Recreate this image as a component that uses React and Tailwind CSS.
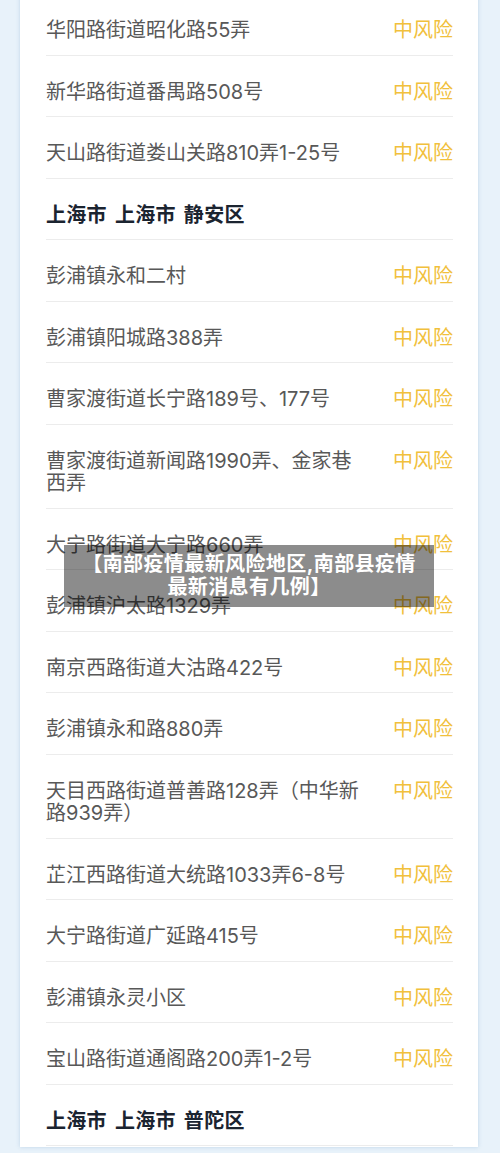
const rows = [
  { text: "华阳路街道昭化路55弄" },
  { text: "新华路街道番禺路508号" },
  { text: "天山路街道娄山关路810弄1-25号" },
  { text: "上海市 上海市 静安区", heading: true },
  { text: "彭浦镇永和二村" },
  { text: "彭浦镇阳城路388弄" },
  { text: "曹家渡街道长宁路189号、177号" },
  { text: "曹家渡街道新闻路1990弄、金家巷西弄" },
  { text: "大宁路街道大宁路660弄" },
  { text: "彭浦镇沪太路1329弄" },
  { text: "南京西路街道大沽路422号" },
  { text: "彭浦镇永和路880弄" },
  { text: "天目西路街道普善路128弄（中华新路939弄）" },
  { text: "芷江西路街道大统路1033弄6-8号" },
  { text: "大宁路街道广延路415号" },
  { text: "彭浦镇永灵小区" },
  { text: "宝山路街道通阁路200弄1-2号" },
  { text: "上海市 上海市 普陀区", heading: true },
];

const RiskRow = ({ text, heading }) => (
  <div className="flex items-start gap-[25px] border-b border-[#ececec] pt-[25px] pb-[13px] leading-[22.5px]">
    {heading ? (
      <span className="flex-1 min-w-0 text-[20px] font-bold tracking-[0.3px] text-[#1b2430] [word-spacing:3px]">
        {text}
      </span>
    ) : (
      <>
        <span className="flex-1 min-w-0 text-[20px] text-[#585858]">{text}</span>
        <span className="shrink-0 text-[20px] text-[#f1c03c]">中风险</span>
      </>
    )}
  </div>
);

export default function App() {
  return (
    <div
      className="relative h-[1153px] w-full overflow-hidden bg-[#e8f2fa]"
      style={{ fontFamily: 'Inter, "Noto Sans CJK SC", "Noto Sans", sans-serif' }}
    >
      {/* white list card */}
      <div className="ml-[20px] h-full w-[458px] bg-white pl-[26px] pr-[25px] shadow-[0_0_4px_rgba(140,175,210,0.45)]">
        <div className="-mt-[6px]">
          {rows.map((r, i) => (
            <RiskRow key={i} {...r} />
          ))}
        </div>
      </div>

      {/* title overlay */}
      <div className="absolute left-[64px] top-[545px] w-[370px] bg-black/45 px-[12px] py-[8px] text-center text-[20px] font-bold leading-[23px] tracking-[0.4px] text-white">
        【南部疫情最新风险地区,南部县疫情最新消息有几例】
      </div>
    </div>
  );
}
